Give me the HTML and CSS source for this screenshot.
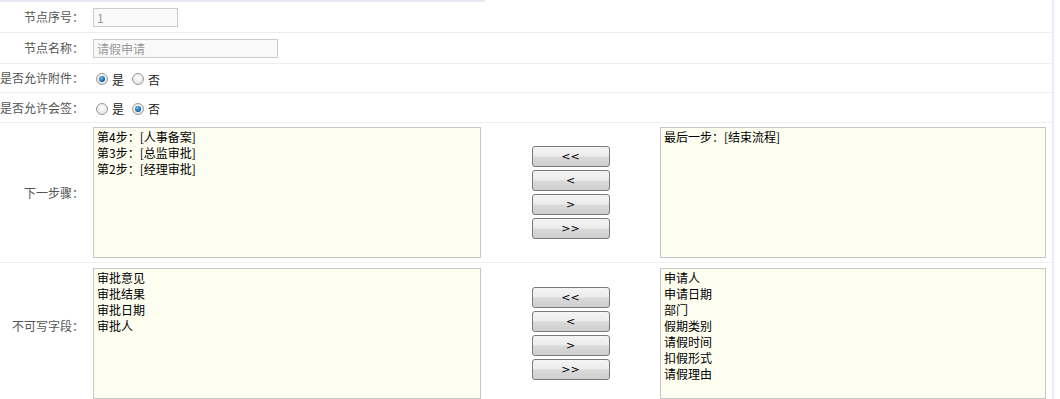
FILE: index.html
```html
<!DOCTYPE html>
<html>
<head>
<meta charset="utf-8">
<link rel="stylesheet" href="styles.css">
</head>
<body>
<div class="frame">
  <div class="topline"></div>
  <div class="row r1">
    <div class="label">节点序号：</div>
    <div class="field"><div class="input small">1</div></div>
  </div>
  <div class="row r2">
    <div class="label">节点名称：</div>
    <div class="field"><div class="input wide">请假申请</div></div>
  </div>
  <div class="row r3">
    <div class="label">是否允许附件：</div>
    <div class="field radios">
      <span class="radio on"></span><span class="rtext">是</span>
      <span class="radio"></span><span class="rtext">否</span>
    </div>
  </div>
  <div class="row r4">
    <div class="label">是否允许会签：</div>
    <div class="field radios">
      <span class="radio"></span><span class="rtext">是</span>
      <span class="radio on"></span><span class="rtext">否</span>
    </div>
  </div>
  <div class="row big">
    <div class="label">下一步骤：</div>
    <div class="field lists">
      <div class="listbox left">
        <div>第4步：[人事备案]</div>
        <div>第3步：[总监审批]</div>
        <div>第2步：[经理审批]</div>
      </div>
      <div class="buttons">
        <div class="btn">&lt;&lt;</div>
        <div class="btn">&lt;</div>
        <div class="btn">&gt;</div>
        <div class="btn">&gt;&gt;</div>
      </div>
      <div class="listbox right">
        <div>最后一步：[结束流程]</div>
      </div>
    </div>
  </div>
  <div class="row big last">
    <div class="label">不可写字段：</div>
    <div class="field lists">
      <div class="listbox left">
        <div>审批意见</div>
        <div>审批结果</div>
        <div>审批日期</div>
        <div>审批人</div>
      </div>
      <div class="buttons">
        <div class="btn">&lt;&lt;</div>
        <div class="btn">&lt;</div>
        <div class="btn">&gt;</div>
        <div class="btn">&gt;&gt;</div>
      </div>
      <div class="listbox right">
        <div>申请人</div>
        <div>申请日期</div>
        <div>部门</div>
        <div>假期类别</div>
        <div>请假时间</div>
        <div>扣假形式</div>
        <div>请假理由</div>
      </div>
    </div>
  </div>
</div>
</body>
</html>
```

FILE: styles.css
```css
html, body {
  margin: 0;
  padding: 0;
  background: #ffffff;
  overflow: hidden;
}
body {
  font-family: "Noto Sans CJK SC", "Liberation Sans", sans-serif;
  font-size: 12px;
  color: #000;
}
.frame {
  width: 1052px;
  border-right: 2px solid #ebe9fb;
  height: 399px;
  overflow: hidden;
}
.topline {
  width: 485px;
  height: 2px;
  background: #e9e8f8;
}
.row {
  display: flex;
  align-items: center;
  border-bottom: 1px solid #eeeeee;
  box-sizing: border-box;
}
.r1 { height: 31px; }
.r2 { height: 31px; }
.r3 { height: 29px; }
.r4 { height: 30px; }
.big { height: 140px; }
.last { height: 140px; border-bottom: none; align-items: flex-start; padding-top: 5px; }
.last .label { align-self: center; padding-bottom: 19px; }
.label {
  width: 84px;
  flex: none;
  display: flex;
  justify-content: flex-end;
  white-space: nowrap;
  color: #555555;
  line-height: 16px;
}
.field {
  margin-left: 9px;
  display: flex;
  align-items: center;
}
.input {
  box-sizing: border-box;
  height: 19px;
  border: 1px solid #cccccc;
  background: #f9f9f9;
  color: #999999;
  line-height: 17px;
  padding-left: 3px;
}
.input.small { width: 85px; margin-top: 1px; }
.input.wide { width: 185px; }
.radios { padding-left: 3px; margin-top: 2px; }
.radio {
  box-sizing: border-box;
  width: 12px;
  height: 12px;
  border-radius: 50%;
  border: 1px solid #9a9a9a;
  background: radial-gradient(circle at 50% 40%, #ffffff 0, #e2e2e2 80%);
  display: inline-flex;
  align-items: center;
  justify-content: center;
}
.radio.on::after {
  content: "";
  width: 6px;
  height: 6px;
  border-radius: 50%;
  background: radial-gradient(circle at 40% 35%, #6ec0f0 0, #1565a8 60%, #0b3e70 100%);
}
.rtext {
  margin-left: 4px;
  margin-right: 8px;
  color: #222;
}
.lists {
  align-items: center;
}
.listbox {
  box-sizing: border-box;
  height: 131px;
  border: 1px solid #c6c6c6;
  background: #fdfdf0;
  padding: 1px 3px;
  line-height: 16px;
  color: #000;
}
.listbox.left { width: 388px; }
.listbox.right { width: 386px; }
.buttons {
  width: 179px;
  display: flex;
  flex-direction: column;
  align-items: center;
  gap: 3px;
}
.btn {
  box-sizing: border-box;
  width: 78px;
  height: 21px;
  border: 1px solid #7a7a7a;
  border-radius: 3px;
  background: linear-gradient(#f4f4f4 0, #ececec 45%, #d9d9d9 55%, #cfcfcf 100%);
  text-align: center;
  line-height: 19px;
  font-family: "DejaVu Sans", sans-serif;
  font-size: 11px;
  color: #000;
}
```
